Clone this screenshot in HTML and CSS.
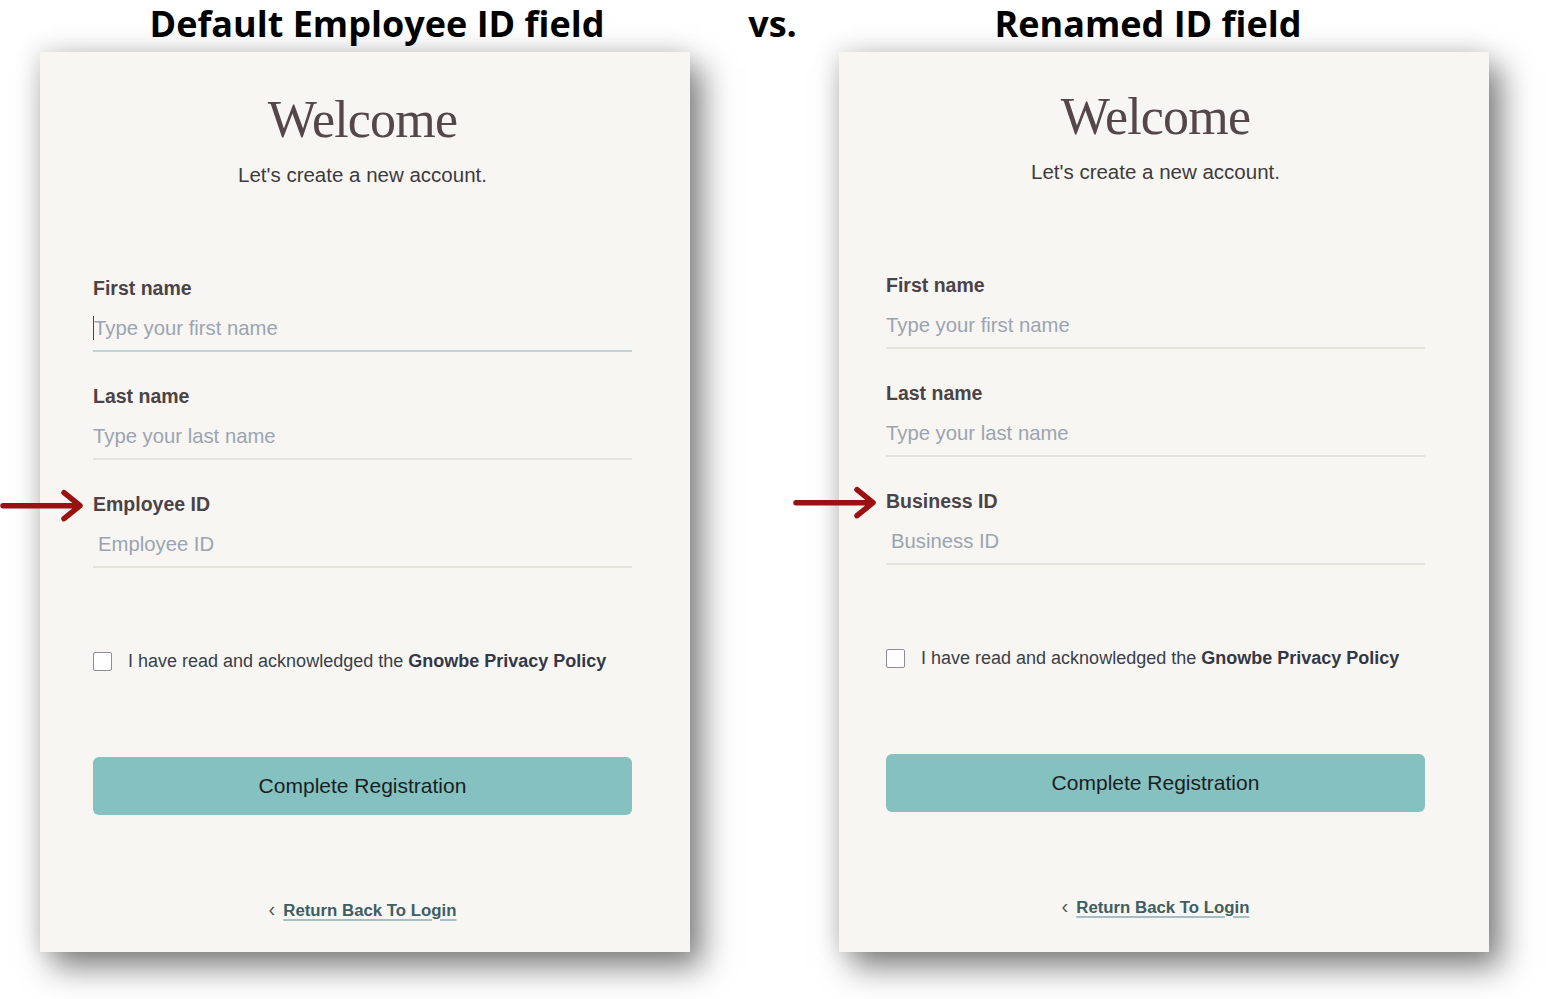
FILE: index.html
```html
<!DOCTYPE html>
<html lang="en">
<head>
    <meta charset="UTF-8">
    <meta name="viewport" content="width=device-width, initial-scale=1.0">
    <title>Employee ID field vs. renamed ID field</title>
    <link rel="stylesheet" href="styles.css">
</head>
<body>
    <main class="compare">
        <h2 class="caption caption-left">Default Employee ID field</h2>
        <h2 class="caption caption-vs">vs.</h2>
        <h2 class="caption caption-right">Renamed ID field</h2>

        <!-- default signup form -->
        <form class="signup-card">
            <h1 class="welcome">Welcome</h1>
            <p class="intro">Let's create a new account.</p>

            <div class="field">
                <label for="firstA">First name</label>
                <input type="text" id="firstA" class="field-input is-focused" placeholder="Type your first name">
            </div>
            <div class="field">
                <label for="lastA">Last name</label>
                <input type="text" id="lastA" class="field-input" placeholder="Type your last name">
            </div>
            <div class="field">
                <label for="idA" class="marked">
                    <svg class="pointer" viewBox="0 0 84 34" width="84" height="34">
                        <path d="M3 17 H78 M64 4 L80 17 L64 30" fill="none" stroke="#9b1111" stroke-width="5.5" stroke-linecap="round" stroke-linejoin="round"/>
                    </svg>
                    Employee ID
                </label>
                <input type="text" id="idA" class="field-input inset" placeholder="Employee ID">
            </div>

            <label class="consent">
                <span class="box"></span>
                <span>I have read and acknowledged the <b>Gnowbe Privacy Policy</b></span>
            </label>

            <button type="button" class="submit">Complete Registration</button>

            <p class="back"><span class="chev">&lsaquo;</span><a href="#">Return Back To Login</a></p>
        </form>

        <div class="spacer"></div>

        <!-- same form with the id field renamed -->
        <form class="signup-card signup-card--tight">
            <h1 class="welcome">Welcome</h1>
            <p class="intro">Let's create a new account.</p>

            <div class="field">
                <label for="firstB">First name</label>
                <input type="text" id="firstB" class="field-input" placeholder="Type your first name">
            </div>
            <div class="field">
                <label for="lastB">Last name</label>
                <input type="text" id="lastB" class="field-input" placeholder="Type your last name">
            </div>
            <div class="field">
                <label for="idB" class="marked">
                    <svg class="pointer" viewBox="0 0 84 34" width="84" height="34">
                        <path d="M3 17 H78 M64 4 L80 17 L64 30" fill="none" stroke="#9b1111" stroke-width="5.5" stroke-linecap="round" stroke-linejoin="round"/>
                    </svg>
                    Business ID
                </label>
                <input type="text" id="idB" class="field-input inset" placeholder="Business ID">
            </div>

            <label class="consent">
                <span class="box"></span>
                <span>I have read and acknowledged the <b>Gnowbe Privacy Policy</b></span>
            </label>

            <button type="button" class="submit">Complete Registration</button>

            <p class="back"><span class="chev">&lsaquo;</span><a href="#">Return Back To Login</a></p>
        </form>
    </main>
</body>
</html>
```

FILE: styles.css
```css
body {
    margin: 0;
    background-color: #ffffff;
    font-family: "Liberation Sans", Arial, sans-serif;
}
.compare {
    display: grid;
    grid-template-columns: 650px 149px 650px;
    grid-template-rows: 52px 900px;
    padding: 0 0 47px 40px;
}
.caption {
    margin: 0;
    font-family: "Open Sans", sans-serif;
    font-weight: 700;
    font-size: 36px;
    line-height: 48px;
    color: #000000;
    text-align: center;
}
.caption-left {
    padding-left: 24px;
}
.caption-vs {
    padding-left: 16px;
}
.caption-right {
    padding-right: 32px;
}
.signup-card {
    position: relative;
    z-index: 1;
    box-sizing: border-box;
    height: 900px;
    padding: 38px 58px 0 53px;
    background-color: #f7f6f3;
    display: flex;
    flex-direction: column;
    box-shadow: 12px 15px 30px rgba(0, 0, 0, 0.5), -4px -4px 22px rgba(0, 0, 0, 0.1);
}
.signup-card--tight {
    padding-top: 35px;
    padding-left: 47px;
    padding-right: 64px;
}
.welcome {
    margin: 0;
    font-family: "Liberation Serif", "Times New Roman", serif;
    font-weight: 400;
    font-size: 52px;
    line-height: 60px;
    letter-spacing: -0.8px;
    color: #534749;
    text-align: center;
}
.intro {
    margin: 13px 0 0;
    font-size: 20.5px;
    line-height: 24px;
    color: #3e3a3c;
    text-align: center;
}
.field {
    display: flex;
    flex-direction: column;
    margin-top: 32px;
}
.intro + .field {
    margin-top: 89px;
}
.field label {
    position: relative;
    font-size: 19.5px;
    line-height: 24px;
    font-weight: 700;
    color: #4b4346;
    margin-bottom: 6px;
}
.pointer {
    position: absolute;
    left: -93px;
    top: 50%;
    transform: translateY(-45%);
}
.field-input {
    box-sizing: border-box;
    height: 46px;
    padding: 0;
    border: none;
    border-bottom: 2px solid #e4e3dc;
    background: transparent;
    font-family: inherit;
    font-size: 20.3px;
    color: #333;
    outline: none;
}
.field-input::placeholder {
    color: #9ba4b0;
}
/* caret drawn at the start of the active field */
.field-input.is-focused {
    border-bottom-color: #bdd4d7;
    padding-left: 1px;
    background: linear-gradient(#444, #444) no-repeat 0 50% / 1px 24px;
}
.field-input.inset {
    padding-left: 5px;
}
.consent {
    display: flex;
    align-items: center;
    gap: 16px;
    margin-top: 81px;
    font-size: 18px;
    line-height: 24px;
    color: #3a3e4a;
}
.consent b {
    color: #343845;
}
.box {
    width: 17px;
    height: 17px;
    border: 1.5px solid #8e8c99;
    border-radius: 2px;
    background-color: #ffffff;
}
.submit {
    margin-top: 84px;
    height: 58px;
    border: none;
    border-radius: 6px;
    background-color: #85c1c1;
    font-family: inherit;
    font-size: 21px;
    color: #1a1e1e;
    cursor: pointer;
}
.back {
    margin: 82px 0 0;
    text-align: center;
    font-size: 16.8px;
    line-height: 24px;
}
.chev {
    color: #555;
    font-size: 20px;
    margin-right: 8px;
}
.back a {
    color: #3d5e63;
    font-weight: 700;
    text-decoration: underline;
    text-decoration-color: #a5bec1;
    text-decoration-thickness: 1.5px;
    text-underline-offset: 3px;
}
.spacer {
    height: 900px;
}
```
